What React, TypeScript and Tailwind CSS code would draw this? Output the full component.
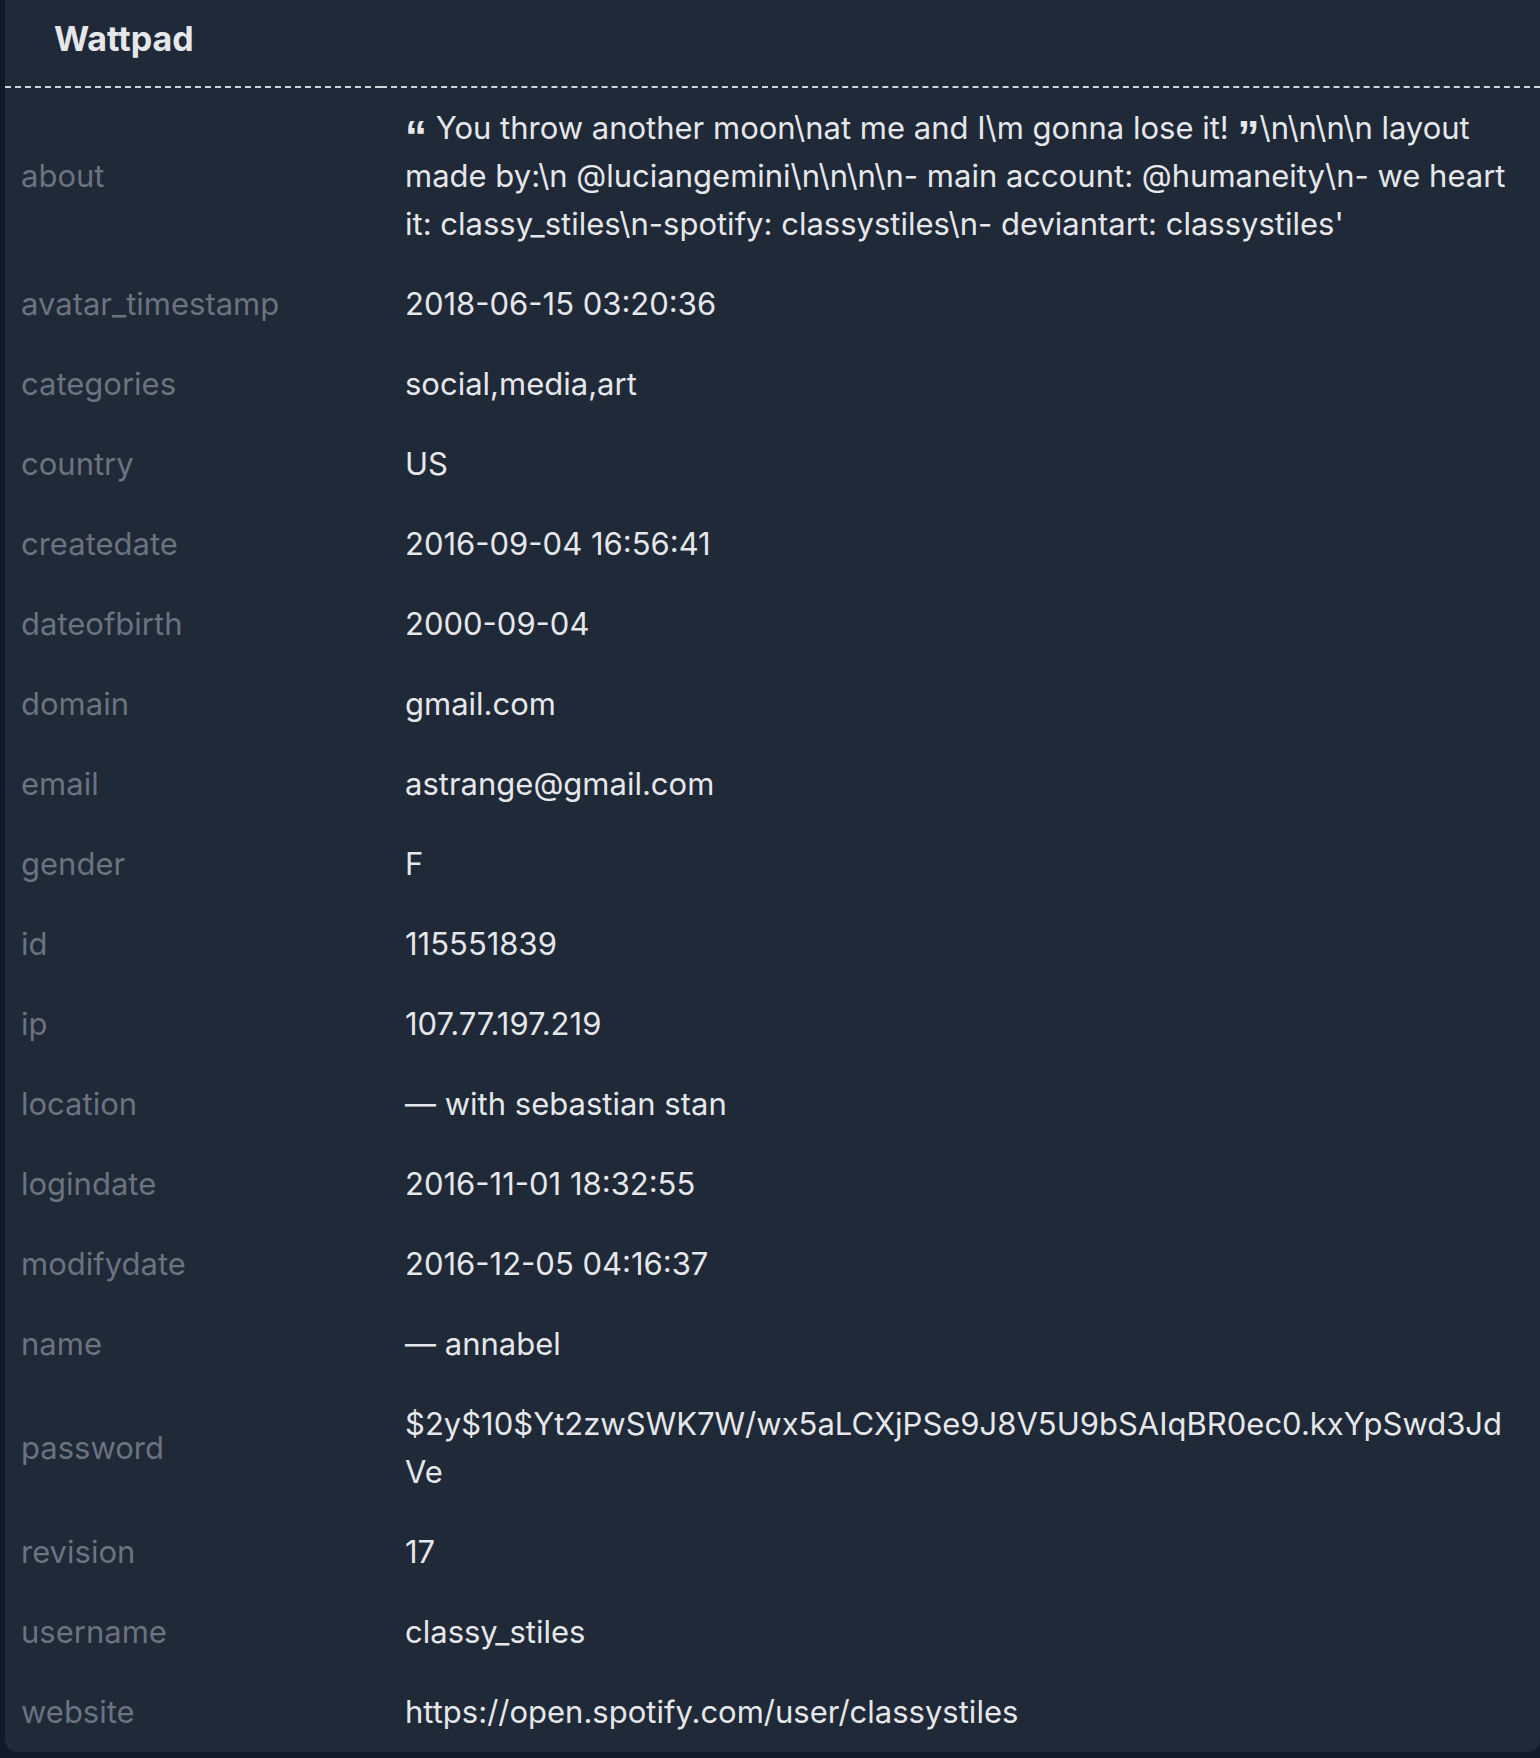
const quote = "inline-block align-top h-[48px] leading-[48px] relative top-[9px] font-['Liberation_Sans',sans-serif] font-bold text-[44px]";

const rows: [string, React.ReactNode][] = [
  [
    "about",
    <>
      <span className={quote}>{"\u201C"}</span>
      {" You throw another moon\\nat me and I\\m gonna lose it! "}
      <span className={quote}>{"\u201D"}</span>
      {"\\n\\n\\n\\n layout made by:\\n @luciangemini\\n\\n\\n\\n- main account: @humaneity\\n- we heart it: classy_stiles\\n-spotify: classystiles\\n- deviantart: classystiles'"}
    </>,
  ],
  ["avatar_timestamp", "2018-06-15 03:20:36"],
  ["categories", "social,media,art"],
  ["country", "US"],
  ["createdate", "2016-09-04 16:56:41"],
  ["dateofbirth", "2000-09-04"],
  ["domain", "gmail.com"],
  ["email", "astrange@gmail.com"],
  ["gender", "F"],
  ["id", "115551839"],
  ["ip", "107.77.197.219"],
  ["location", "\u2014 with sebastian stan"],
  ["logindate", "2016-11-01 18:32:55"],
  ["modifydate", "2016-12-05 04:16:37"],
  ["name", "\u2014 annabel"],
  ["password", "$2y$10$Yt2zwSWK7W/wx5aLCXjPSe9J8V5U9bSAIqBR0ec0.kxYpSwd3JdVe"],
  ["revision", "17"],
  ["username", "classy_stiles"],
  ["website", "https://open.spotify.com/user/classystiles"],
];

export default function App() {
  return (
    <div className="min-h-[1758px] bg-[#111827] pl-[5px] pb-[6px] font-['Inter',sans-serif]">
      <div className="bg-[#1f2937] rounded-b-xl overflow-hidden">
        <div className="grid grid-cols-[376px_minmax(0,1fr)]">
          <div className="h-[88px] border-b-2 border-dashed border-[#d1d5db] pl-[49px] flex items-center pb-[10px]">
            <h2 className="text-[34px] font-bold text-[#e5e7eb]">Wattpad</h2>
          </div>
          <div className="h-[88px] border-b-2 border-dashed border-[#d1d5db]" />
          {rows.map(([k, v]) => (
            <div key={k} className="contents">
              <div className="pl-[16px] py-[16px] flex items-center text-[31px] leading-[48px] text-[#6b7280]">
                {k}
              </div>
              <div className="pl-[24px] pr-[25px] py-[16px] text-[31px] leading-[48px] text-[#e5e7eb] break-words">
                {v}
              </div>
            </div>
          ))}
        </div>
      </div>
    </div>
  );
}
